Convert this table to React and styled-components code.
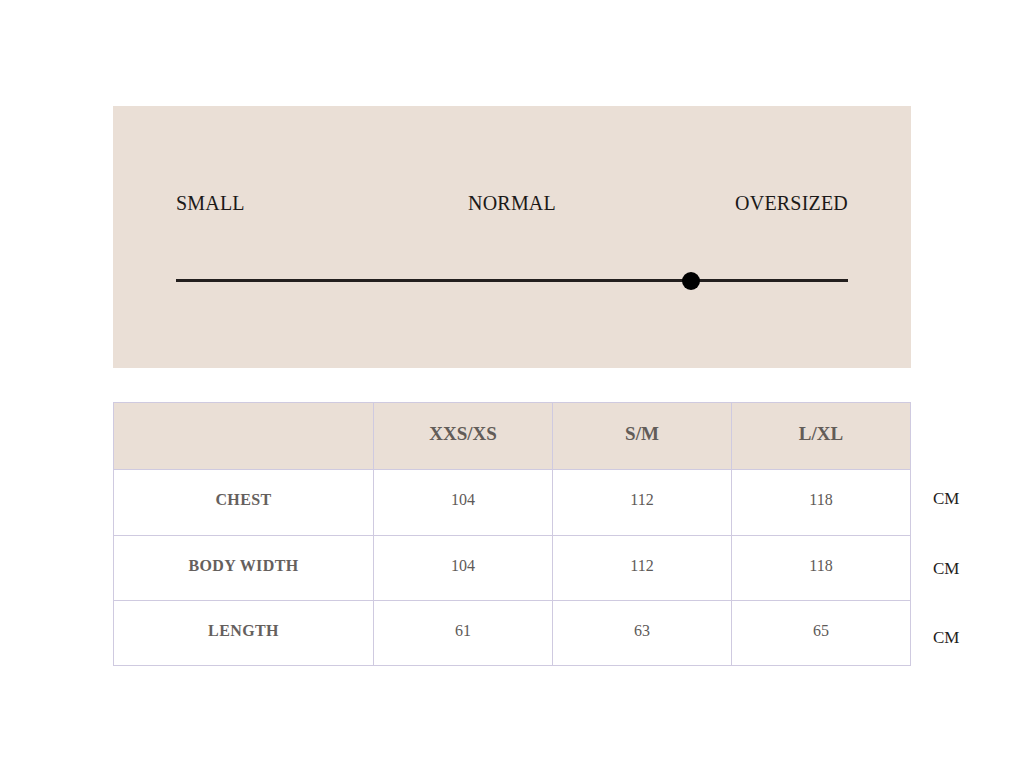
import React from "react";
import styled, { createGlobalStyle } from "styled-components";

const Global = createGlobalStyle`
  html, body { margin: 0; padding: 0; background: #ffffff; }
  body { font-family: "Liberation Serif", "Times New Roman", serif; }
`;

const Page = styled.div`
  display: grid;
  grid-template-columns: 113px 798px 1fr;
  padding-top: 106px;
  row-gap: 34px;
`;

const Panel = styled.section`
  grid-column: 2;
  background: #eadfd6;
  padding: 86px 63px 78px 63px;
  display: flex;
  flex-direction: column;
  gap: 57px;
`;

const Labels = styled.div`
  display: grid;
  grid-template-columns: 1fr auto 1fr;
  align-items: center;
`;

const Label = styled.span`
  font-size: 20px;
  line-height: 23px;
  color: #1b1918;
  letter-spacing: 0.2px;
  justify-self: ${(p) => p.$align};
`;

const Track = styled.div`
  position: relative;
  height: 18px;
  &::before {
    content: "";
    position: absolute;
    left: 0;
    right: 0;
    top: 7px;
    height: 3px;
    background: #231f1e;
  }
`;

const Knob = styled.div`
  position: absolute;
  top: 0;
  width: 18px;
  height: 18px;
  margin-left: -9px;
  border-radius: 50%;
  background: #000;
`;

const TableRow = styled.div`
  grid-column: 2 / 4;
  display: flex;
  align-items: flex-start;
`;

const Grid = styled.div`
  width: 798px;
  box-sizing: border-box;
  display: grid;
  grid-template-columns: 260px 179px 179px 179px;
  grid-template-rows: 67px 66px 65px 65px;
  border-top: 1px solid #cfcae0;
  border-left: 1px solid #cfcae0;
`;

const Cell = styled.div`
  box-sizing: border-box;
  border-right: 1px solid #cfcae0;
  border-bottom: 1px solid #cfcae0;
  display: flex;
  align-items: center;
  justify-content: center;
  background: ${(p) => (p.$head ? "#eadfd6" : "#ffffff")};
  color: ${(p) => (p.$head ? "#625c58" : p.$label ? "#65605d" : "#5e5a58")};
  font-size: ${(p) => (p.$head ? "19px" : "16px")};
  font-weight: ${(p) => (p.$head || p.$label ? 700 : 400)};
  letter-spacing: ${(p) => (p.$label ? "0.4px" : "0")};
  padding-bottom: ${(p) => (p.$head ? "4px" : "5px")};
`;

const Units = styled.div`
  display: grid;
  grid-template-rows: 68px 66px 65px 65px;
  margin-left: 22px;
`;

const Unit = styled.div`
  font-size: 17px;
  color: #1f1d1c;
  display: flex;
  align-items: center;
  transform: translateY(${(p) => p.$shift}px);
`;

const sizes = ["XXS/XS", "S/M", "L/XL"];
const rows = [
  { name: "CHEST", values: [104, 112, 118], shift: -4 },
  { name: "BODY WIDTH", values: [104, 112, 118], shift: 0 },
  { name: "LENGTH", values: [61, 63, 65], shift: 4 },
];

export default function App() {
  const pos = 76.6;
  return (
    <>
      <Global />
      <Page>
        <Panel>
          <Labels>
            <Label $align="start">SMALL</Label>
            <Label $align="center">NORMAL</Label>
            <Label $align="end">OVERSIZED</Label>
          </Labels>
          <Track>
            <Knob style={{ left: `${pos}%` }} />
          </Track>
        </Panel>
        <TableRow>
          <Grid>
            <Cell $head />
            {sizes.map((s) => (
              <Cell $head key={s}>{s}</Cell>
            ))}
            {rows.map((r) => (
              <React.Fragment key={r.name}>
                <Cell $label>{r.name}</Cell>
                {r.values.map((v, i) => (
                  <Cell key={i}>{v}</Cell>
                ))}
              </React.Fragment>
            ))}
          </Grid>
          <Units>
            <div />
            {rows.map((r) => (
              <Unit key={r.name} $shift={r.shift}>CM</Unit>
            ))}
          </Units>
        </TableRow>
      </Page>
    </>
  );
}
